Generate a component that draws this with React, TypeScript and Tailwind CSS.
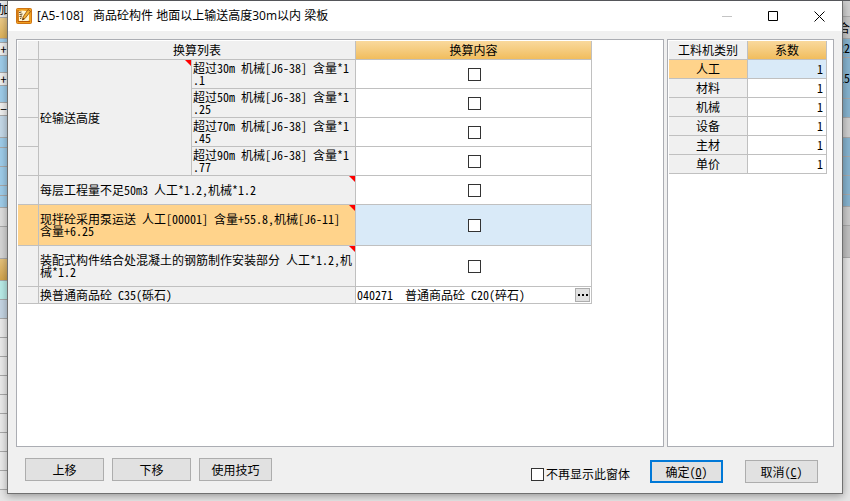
import React from 'react';

const cell = 'relative border-r border-b border-[#c0c0c0] p-0 font-normal';
const headCell = 'border-r border-b border-[#c0c0c0] p-0 font-normal text-center';
const button = 'h-[23px] border border-[#adadad] bg-[#e1e1e1] text-center leading-none hover:border-[#0078d7] hover:bg-[#e5f1fb]';
const checkbox = 'block size-[13px] appearance-none border border-[#333] bg-white checked:bg-[#333]';

const heightRows = [
    { id: 'h30', text: '超过30m 机械[J6-38] 含量*1\n.1' },
    { id: 'h50', text: '超过50m 机械[J6-38] 含量*1\n.25' },
    { id: 'h70', text: '超过70m 机械[J6-38] 含量*1\n.45' },
    { id: 'h90', text: '超过90m 机械[J6-38] 含量*1\n.77' },
];

const optionRows = [
    { id: 'floor', text: '每层工程量不足50m3 人工*1.2,机械*1.2', height: 'h-[29px]', active: false },
    { id: 'pump', text: '现拌砼采用泵运送 人工[00001] 含量+55.8,机械[J6-11]\n含量+6.25', height: 'h-[41px]', active: true },
    { id: 'joint', text: '装配式构件结合处混凝土的钢筋制作安装部分 人工*1.2,机\n械*1.2', height: 'h-[41px]', active: false },
];

const factors = ['人工', '材料', '机械', '设备', '主材', '单价'];

// Rows of the worksheet that stays visible on both sides of the dialog
const leftRows = [
    { style: 'h-[17px] bg-[#ececec]', text: '加' },
    { style: 'h-[21px] bg-linear-to-b from-[#edcb88] to-[#deb25a]', text: '' },
    { style: 'h-[4px] bg-[#9fcdea]', text: '' },
    { style: 'h-[13px] bg-[#f0f0f0]', text: '+' },
    { style: 'h-[17px] bg-[#9fcdea]', text: '' },
    { style: 'h-[13px] bg-[#f0f0f0]', text: '+' },
    { style: 'h-[17px] bg-[#9fcdea]', text: '' },
    { style: 'h-[13px] bg-[#f0f0f0]', text: '−' },
    { style: 'h-[22px] bg-[#c5d9e8]', text: '' },
    { style: 'h-[10px] bg-[#9fcdea]', text: '' },
    { style: 'h-[19px] bg-[#9fcdea]', text: '' },
    { style: 'h-[19px] bg-[#9fcdea]', text: '' },
    { style: 'h-[10px] bg-[#9fcdea]', text: '' },
    { style: 'h-[12px] bg-[#9fcdea]', text: '' },
    { style: 'h-[19px] bg-[#dedede]', text: '' },
    { style: 'h-[32px] bg-[#d6d6d6]', text: '' },
    { style: 'h-[22px] bg-linear-to-b from-[#e6c27c] to-[#d3a54c]', text: '' },
    { style: 'h-[19px] bg-[#b9ece8]', text: '' },
    { style: 'h-[19px] bg-[#c5d5e4]', text: '' },
    { style: 'h-[19px] bg-[#ebebeb]', text: '' },
    { style: 'h-[19px] bg-[#ebebeb]', text: '' },
    { style: 'h-[19px] bg-[#ebebeb]', text: '' },
    { style: 'h-[19px] bg-[#ebebeb]', text: '' },
    { style: 'h-[19px] bg-[#ebebeb]', text: '' },
    { style: 'h-[19px] bg-[#ebebeb]', text: '' },
    { style: 'h-[19px] bg-[#ebebeb]', text: '' },
    { style: 'h-[19px] bg-[#ebebeb]', text: '' },
    { style: 'h-[19px] bg-[#ebebeb]', text: '' },
];

const rightRows = [
    { style: 'h-[16px] bg-[#cfcfcf]', text: '' },
    { style: 'h-[22px] bg-[#c6c6c6]', text: '合' },
    { style: 'h-[19px] bg-[#86b3cf]', text: '22' },
    { style: 'h-[41px] bg-[#86b3cf]', text: '15' },
    { style: 'h-[19px] bg-[#86b3cf]', text: '' },
    { style: 'h-[20px] bg-[#cfcfcf]', text: '' },
    { style: 'h-[19px] bg-[#86b3cf]', text: '' },
    { style: 'h-[19px] bg-[#86b3cf]', text: '' },
    { style: 'h-[19px] bg-[#86b3cf]', text: '' },
    { style: 'h-[12px] bg-[#86b3cf]', text: '' },
    { style: 'h-[19px] bg-[#cacaca]', text: '' },
    { style: 'h-[32px] bg-[#c0c0c0]', text: '' },
];

const SheetEdge = ({ rows, align }: { rows: { style: string; text: string }[]; align: string }) => (
    <div className="w-[7px] shrink-0">
        {rows.map((row, i) => (
            <div key={i} className={`flex items-center border-b border-[#a9a9a9] leading-none whitespace-nowrap ${align} ${row.style}`}>
                {row.text}
            </div>
        ))}
    </div>
);

const NoteMark = () => (
    <svg className="absolute top-0 right-0" width="6" height="6" viewBox="0 0 6 6" aria-hidden="true">
        <path d="M0 0H6V6Z" fill="#ff0000" />
    </svg>
);

const AppIcon = () => (
    <svg width="16" height="16" viewBox="0 0 16 16" aria-hidden="true">
        <rect x="0.5" y="0.5" width="15" height="15" rx="1" fill="#f0a020" stroke="#cf7412" />
        <path d="M2.5 3.5L6 2.5L10 3L13 2.5V12.5L10 13.5L3 13Z" fill="#fff6d2" />
        <path d="M3 4.5L5.5 4M3.5 6.5L6.5 6M3.5 8.5L6 8M4 10.5L5.5 10" stroke="#5c3a12" strokeWidth="1" />
        <path d="M12 1.5L14.5 3.5L9 10.5L6.5 12L7 9Z" fill="#f4b233" stroke="#8a4706" strokeWidth="0.8" />
        <path d="M6.5 12L7 10L8.3 11Z" fill="#3c2206" />
        <path d="M2 2V13.5H14" stroke="#b85806" fill="none" />
    </svg>
);

const TitleBar = () => (
    <header className="flex h-[30px] items-center bg-white pl-2">
        <AppIcon />
        <h1 className="ml-[5px] flex-1 font-['Open_Sans','Noto_Sans_CJK_SC',sans-serif] text-xs whitespace-pre [font-feature-settings:normal]">
            {'[A5-108]   商品砼构件 地面以上输送高度30m以内 梁板'}
        </h1>
        <button type="button" disabled className="flex h-full w-[46px] items-center justify-center">
            <svg width="11" height="11" viewBox="0 0 11 11" stroke="#c4c4c4">
                <path d="M0 5.5H10" />
            </svg>
        </button>
        <button type="button" className="flex h-full w-[46px] items-center justify-center hover:bg-[#e5e5e5]">
            <svg width="11" height="11" viewBox="0 0 11 11" fill="none" stroke="#000">
                <path d="M0.5 0.5H9.5V9.5H0.5Z" />
            </svg>
        </button>
        <button type="button" className="flex h-full w-[46px] items-center justify-center hover:bg-[#e81123]">
            <svg width="11" height="11" viewBox="0 0 11 11" stroke="#000">
                <path d="M0.5 0.5L10.5 10.5M10.5 0.5L0.5 10.5" />
            </svg>
        </button>
    </header>
);

const ConversionTable = () => (
    <table className="w-[574px] table-fixed border-separate border-spacing-0">
        <colgroup>
            <col className="w-[21px]" />
            <col className="w-[153px]" />
            <col className="w-[164px]" />
            <col className="w-[236px]" />
        </colgroup>
        <thead>
            <tr className="h-[19px]">
                <th className={`${headCell} bg-[#f0f0f0]`}></th>
                <th colSpan={2} className={`${headCell} bg-[#f0f0f0]`}>换算列表</th>
                <th className={`${headCell} bg-linear-to-b from-[#f9d99c] to-[#f1bd5c]`}>换算内容</th>
            </tr>
        </thead>
        <tbody>
            {heightRows.map((row, i) => (
                <tr key={row.id} className="h-[29px]">
                    <td className={`${cell} bg-[#f0f0f0]`}></td>
                    {i === 0 && (
                        <th rowSpan={4} className={`${cell} bg-[#f0f0f0] pl-px text-left`}>
                            砼输送高度
                            <NoteMark />
                        </th>
                    )}
                    <td id={row.id} className={`${cell} bg-[#f0f0f0] pl-px whitespace-pre`}>{row.text}</td>
                    <td className={`${cell} bg-white pl-0.5`}>
                        <input type="checkbox" aria-labelledby={row.id} className={`${checkbox} mx-auto`} />
                    </td>
                </tr>
            ))}
            {optionRows.map((row) => (
                <tr key={row.id} className={row.height}>
                    <td className={`${cell} ${row.active ? 'bg-[#ffd38b]' : 'bg-[#f0f0f0]'}`}></td>
                    <td id={row.id} colSpan={2} className={`${cell} pl-px whitespace-pre ${row.active ? 'bg-[#ffd38b]' : 'bg-[#f0f0f0]'}`}>
                        {row.text}
                        <NoteMark />
                    </td>
                    <td className={`${cell} pl-0.5 ${row.active ? 'bg-[#d9eaf8]' : 'bg-white'}`}>
                        <input type="checkbox" aria-labelledby={row.id} className={`${checkbox} mx-auto`} />
                    </td>
                </tr>
            ))}
            <tr className="h-[17px]">
                <td className={`${cell} bg-[#f0f0f0]`}></td>
                <td id="concrete" colSpan={2} className={`${cell} bg-[#f0f0f0] pl-px`}>换普通商品砼 C35(砾石)</td>
                <td className={`${cell} bg-white`}>
                    <div className="flex items-center justify-between px-px">
                        <span className="whitespace-pre">{'040271  普通商品砼 C20(碎石)'}</span>
                        <button type="button" aria-labelledby="concrete" className="flex h-[14px] w-[15px] items-center justify-center border border-[#adadad] bg-[#e1e1e1]">
                            <svg width="10" height="2" viewBox="0 0 10 2">
                                <path d="M0 0H2V2H0ZM4 0H6V2H4ZM8 0H10V2H8Z" />
                            </svg>
                        </button>
                    </div>
                </td>
            </tr>
        </tbody>
    </table>
);

const FactorTable = () => (
    <table className="w-[158px] table-fixed border-separate border-spacing-0">
        <thead>
            <tr className="h-[19px]">
                <th className={`${headCell} bg-[#f0f0f0]`}>工料机类别</th>
                <th className={`${headCell} bg-linear-to-b from-[#f9d99c] to-[#f1bd5c]`}>系数</th>
            </tr>
        </thead>
        <tbody>
            {factors.map((name, i) => (
                <tr key={name} className="h-[19px]">
                    <th className={`${headCell} ${i === 0 ? 'bg-[#ffd38b]' : 'bg-[#f0f0f0]'}`}>{name}</th>
                    <td className={`${cell} pr-[3px] text-right ${i === 0 ? 'bg-[#d9eaf8]' : 'bg-white'}`}>1</td>
                </tr>
            ))}
        </tbody>
    </table>
);

const App = () => {
    return (
        <div className="flex min-h-screen overflow-hidden border-t border-[#55565a] bg-[#e6e6e6] font-['Noto_Sans_CJK_SC',sans-serif] text-xs leading-3 text-black [font-feature-settings:'hwid']">
            <SheetEdge rows={leftRows} align="justify-center" />
            <main className="z-10 mb-[7px] flex flex-1 flex-col border-x border-b border-[#707070] bg-[#f0f0f0] shadow-[0_2px_8px_rgba(0,0,0,0.35)]">
                <TitleBar />
                <div className="flex flex-1 gap-[3px] px-2 pt-2">
                    <section className="flex-1 border border-[#abadb3] bg-white p-px">
                        <ConversionTable />
                    </section>
                    <section className="w-[167px] border border-[#abadb3] bg-white p-px">
                        <FactorTable />
                    </section>
                </div>
                <footer className="flex h-[46px] items-start justify-between pt-[11px] pr-6 pl-[17px]">
                    <div className="flex gap-2">
                        <button type="button" className={`${button} w-[79px]`}>上移</button>
                        <button type="button" className={`${button} w-[79px]`}>下移</button>
                        <button type="button" className={`${button} w-[73px]`}>使用技巧</button>
                    </div>
                    <div className="flex items-start pt-0.5">
                        <label className="mr-5 flex h-7 items-center gap-0.5">
                            <input type="checkbox" className={checkbox} />
                            不再显示此窗体
                        </label>
                        <button type="button" className="mr-[22px] h-[23px] w-[73px] border-2 border-[#0078d7] bg-[#e1e1e1] leading-none">
                            确定(<span className="underline">O</span>)
                        </button>
                        <button type="button" className={`${button} w-[73px]`}>
                            取消(<span className="underline">C</span>)
                        </button>
                    </div>
                </footer>
            </main>
            <SheetEdge rows={rightRows} align="justify-end" />
        </div>
    );
};

export default App;
